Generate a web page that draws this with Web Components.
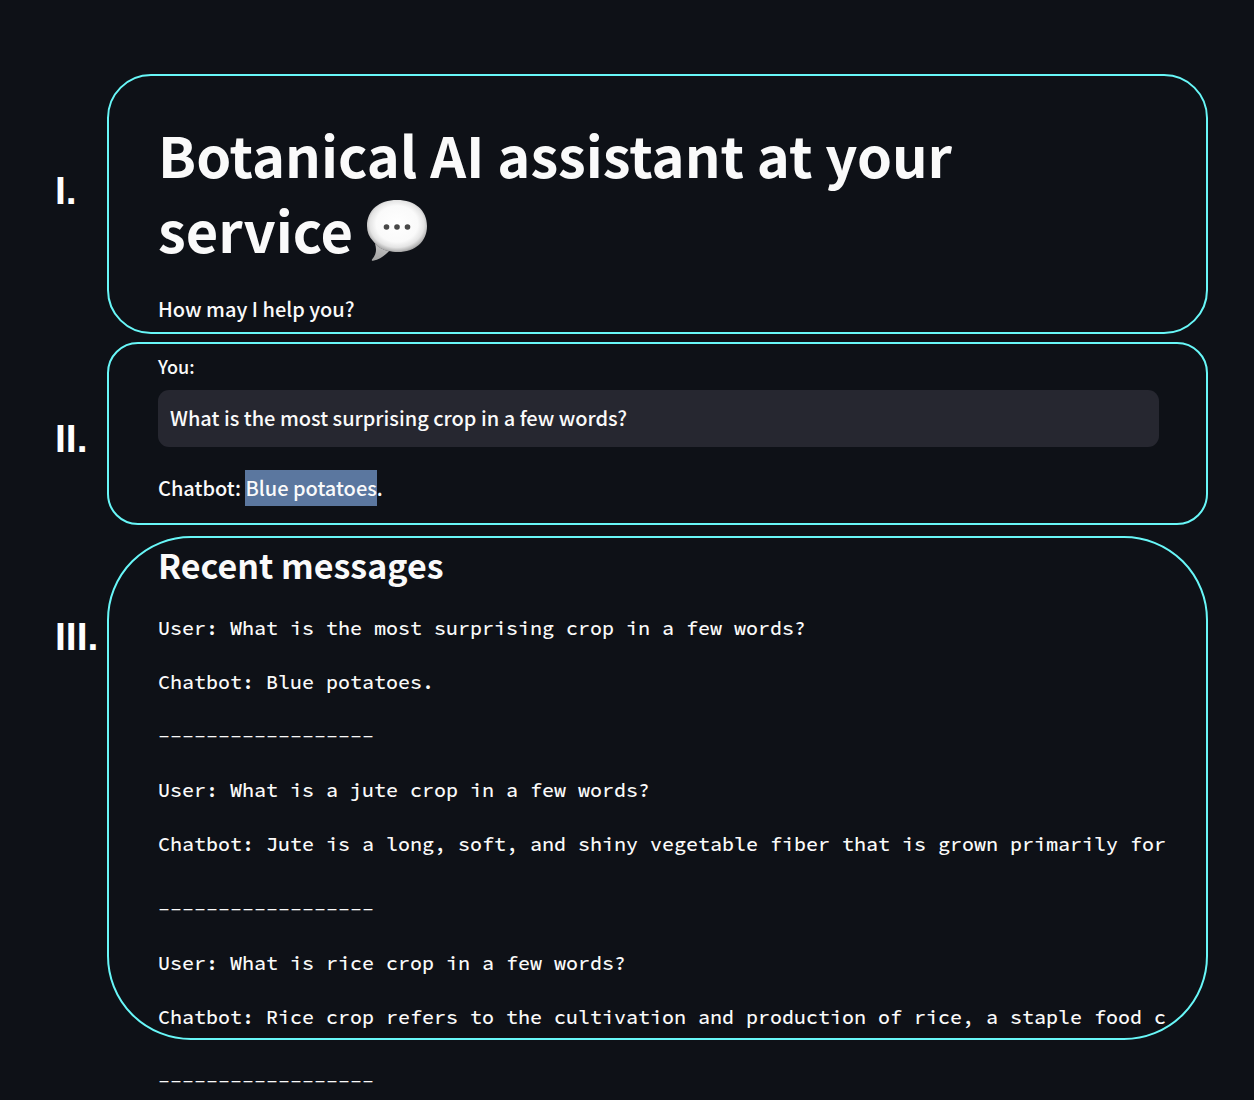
<!DOCTYPE html>
<html lang="en">
<head>
<meta charset="utf-8">
<meta name="viewport" content="width=device-width, initial-scale=1">
<title>Botanical AI assistant</title>
<style>
  html { background: #0e1117; }
  body { margin: 0; color: #fafafa; font: 500 20px/36px "Noto Sans CJK SC", "Noto Sans", sans-serif; }
</style>
</head>
<body>
<assistant-page></assistant-page>

<script>
const define = (name, html) => {
  const template = document.createElement('template');
  template.innerHTML = html.trim();
  customElements.define(name, class extends HTMLElement {
    constructor() {
      super();
      this.attachShadow({ mode: 'open' }).append(template.content.cloneNode(true));
    }
  });
};

// A numbered region: numeral on the left, outlined panel on the right.
define('numbered-section', `
  <style>
    :host { display: grid; grid-template-columns: 52px minmax(0, 1fr); }
    .numeral { padding-top: var(--numeral-top); color: #fff; white-space: nowrap;
      font: bold 39px/40px "Liberation Sans", Arial, sans-serif; }
    .panel { box-sizing: border-box; border: 2px solid #68f7f8; border-radius: var(--radius);
      padding: var(--panel-padding); }
  </style>
  <div class="numeral"><slot name="numeral"></slot></div>
  <section class="panel"><slot></slot></section>
`);

define('speech-balloon', `
  <style>
    :host { display: inline-block; width: 62px; height: 62px; vertical-align: -8px; }
    svg { display: block; width: 100%; height: 100%; }
  </style>
  <svg viewBox="0 0 62 62" role="img" aria-label="speech balloon">
    <defs>
      <radialGradient id="body" cx=".5" cy=".46" r=".58">
        <stop offset="0" stop-color="#fff"/><stop offset=".6" stop-color="#fafafa"/>
        <stop offset=".78" stop-color="#e4e4e4"/><stop offset=".9" stop-color="#b4b4b4"/>
        <stop offset="1" stop-color="#808080"/>
      </radialGradient>
      <linearGradient id="tail" x1=".6" y1="0" x2=".3" y2="1">
        <stop offset="0" stop-color="#c4c4c4"/><stop offset="1" stop-color="#a2a2a2"/>
      </linearGradient>
    </defs>
    <path fill="url(#body)" d="M31 1C49 1 61 11 61 27C61 43 49 53 32 53C28 53 25 52.500 22 52C15 51 10 46 7 42C3 38 1 33 1 27C1 11 13 1 31 1Z"/>
    <path fill="url(#tail)" d="M9 44.500C11 51 10 56 6 60.500C5.500 61.500 6 62 7 61.800C14 60.500 18 57 23 52.200C17 51 12 48 9 44.500Z"/>
    <g fill="#484848"><circle cx="20.500" cy="28" r="2.800"/><circle cx="31" cy="28" r="2.800"/><circle cx="41.500" cy="28" r="2.800"/></g>
  </svg>
`);

define('assistant-header', `
  <style>
    :host { display: block; }
    h1 { margin: 0; font-size: 56px; line-height: 75px; font-weight: 700; }
    p { margin: 25px 0 0; }
  </style>
  <h1>Botanical AI assistant at your service <speech-balloon></speech-balloon></h1>
  <p>How may I help you?</p>
`);

define('chat-prompt', `
  <style>
    :host { display: block; }
    label { display: block; font-size: 18px; line-height: 28px; }
    input { display: block; box-sizing: border-box; width: 100%; height: 57px; margin: 10px 0 0;
      padding: 0 12px 2px; border: 0; border-radius: 11px; background: #262730;
      color: inherit; font: inherit; outline: none; }
    p { margin: 23px 0 0; }
    mark { display: inline-block; background: #5b779f; color: inherit; }
  </style>
  <label for="question">You:</label>
  <input id="question" type="text" value="What is the most surprising crop in a few words?">
  <p>Chatbot: <mark>Blue potatoes</mark>.</p>
`);

define('log-line', `
  <style>
    :host { display: block; overflow: hidden; white-space: nowrap;
      font: 500 20px/30px "Source Code Pro", "Liberation Mono", monospace; }
    :host([long]) { padding-bottom: 11px; }
  </style>
  <slot></slot>
`);

define('message-log', `
  <style>
    :host { display: flex; flex-direction: column; gap: 24px; }
    h2 { margin: 0; font-size: 34px; line-height: 49px; font-weight: 700; }
  </style>
  <h2>Recent messages</h2>
  <log-line>User: What is the most surprising crop in a few words?</log-line>
  <log-line>Chatbot: Blue potatoes.</log-line>
  <log-line>------------------</log-line>
  <log-line>User: What is a jute crop in a few words?</log-line>
  <log-line long>Chatbot: Jute is a long, soft, and shiny vegetable fiber that is grown primarily for</log-line>
  <log-line>------------------</log-line>
  <log-line>User: What is rice crop in a few words?</log-line>
  <log-line>Chatbot: Rice crop refers to the cultivation and production of rice, a staple food c</log-line>
`);

define('assistant-page', `
  <style>
    :host { display: block; padding: 74px 46px 0 55px; }
    .intro { --radius: 44px; --numeral-top: 97px; --panel-padding: 40px 47px 5px 49px; }
    .chat { --radius: 31px; --numeral-top: 77px; --panel-padding: 8px 47px 17px 49px; margin-top: 8px; }
    .recent { --radius: 84px; --numeral-top: 81px; --panel-padding: 2px 38px 6px 49px; margin-top: 11px; }
    .more { margin: 26px 0 0 103px; }
  </style>
  <main>
    <numbered-section class="intro"><span slot="numeral">I.</span><assistant-header></assistant-header></numbered-section>
    <numbered-section class="chat"><span slot="numeral">II.</span><chat-prompt></chat-prompt></numbered-section>
    <numbered-section class="recent"><span slot="numeral">III.</span><message-log></message-log></numbered-section>
    <log-line class="more">------------------</log-line>
  </main>
`);
</script>
</body>
</html>
